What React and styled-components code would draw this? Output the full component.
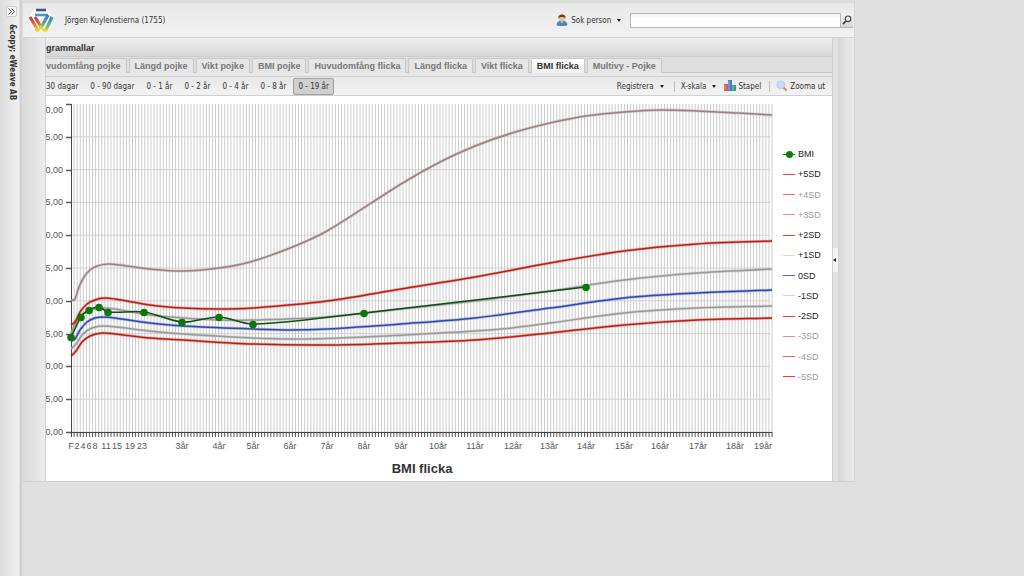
import React, { useState } from 'react';
import styled, { createGlobalStyle } from 'styled-components';

const GlobalStyle = createGlobalStyle`
  * {
    box-sizing: border-box;
  }
  body {
    margin: 0;
    background: #e0e0e0;
    font-family: 'DejaVu Sans Condensed', 'DejaVu Sans', sans-serif;
    font-size: 8px;
    color: #333;
  }
  button, input {
    font: inherit;
    color: inherit;
  }
`;

const TABS = [
  'vudomfång pojke',
  'Längd pojke',
  'Vikt pojke',
  'BMI pojke',
  'Huvudomfång flicka',
  'Längd flicka',
  'Vikt flicka',
  'BMI flicka',
  'Multivy - Pojke',
];

const RANGES = ['30 dagar', '0 - 90 dagar', '0 - 1 år', '0 - 2 år', '0 - 4 år', '0 - 8 år', '0 - 19 år'];

const LEGEND = [
  { label: 'BMI', color: '#0a7d0a', dot: true },
  { label: '+5SD', color: '#ea4a38' },
  { label: '+4SD', color: '#f06a60', muted: true },
  { label: '+3SD', color: '#f28884', muted: true },
  { label: '+2SD', color: '#f04030' },
  { label: '+1SD', color: '#f8c8be' },
  { label: '0SD', color: '#3a6cd0' },
  { label: '-1SD', color: '#f8c8be' },
  { label: '-2SD', color: '#f04030' },
  { label: '-3SD', color: '#f28884', muted: true },
  { label: '-4SD', color: '#f06060', muted: true },
  { label: '-5SD', color: '#f04030', muted: true },
];

// plot area inside the svg
const LEFT = 25;
const RIGHT = 726;
const TOP = 8;
const BOTTOM = 336;
const MONTHS = 228;

const CURVES = [
  {
    id: '+5SD',
    color: '#9c8080',
    points: [[25, 204], [29, 203], [33, 191], [38, 181], [44, 174], [51, 170], [62, 168], [74, 169], [104, 173], [137, 175], [173, 172], [204, 166], [244, 152], [281, 135], [355, 88], [394, 66], [429, 50], [466, 37], [504, 27], [540, 20], [578, 16], [614, 14], [651, 15], [726, 19]],
  },
  {
    id: '+1SD',
    color: '#999',
    points: [[25, 237], [32, 222], [41, 215], [54, 212], [69, 213], [104, 219], [137, 222], [173, 224], [207, 224], [281, 221], [355, 213], [429, 205], [504, 195], [578, 184], [651, 177], [726, 173]],
  },
  {
    id: '-1SD',
    color: '#999',
    points: [[25, 253], [30, 248], [37, 238], [46, 232], [58, 230], [104, 235], [137, 238], [207, 242], [254, 243], [318, 241], [394, 237], [429, 235], [466, 232], [504, 227], [578, 217], [651, 212], [726, 210]],
  },
  {
    id: '+2SD',
    color: '#bf1c10',
    points: [[25, 229], [29, 226], [34, 216], [41, 208], [49, 204], [58, 202], [69, 203], [104, 209], [137, 212], [173, 213], [207, 212], [281, 205], [355, 193], [429, 181], [504, 167], [578, 155], [651, 148], [726, 145]],
  },
  {
    id: '-2SD',
    color: '#bf1c10',
    points: [[25, 260], [30, 255], [36, 246], [44, 240], [56, 237], [69, 238], [104, 242], [137, 244], [207, 248], [281, 249], [355, 247], [429, 244], [504, 237], [578, 229], [651, 224], [726, 222]],
  },
  {
    id: '0SD',
    color: '#2c49b4',
    points: [[25, 245], [29, 243], [34, 234], [41, 226], [49, 222], [58, 221], [69, 222], [104, 227], [137, 230], [207, 233], [244, 234], [281, 233], [355, 228], [429, 222], [504, 212], [578, 202], [651, 197], [726, 194]],
  },
];

const MEASUREMENTS = [[25, 241], [35, 221], [43, 214], [53, 211], [62, 216], [98, 216], [136, 226], [173, 221], [207, 228], [318, 217], [540, 191]];

const Y_LABELS = ['0,00', '5,00', '0,00', '5,00', '0,00', '5,00', '0,00', '5,00', '0,00', '5,00', '0,00'];

const X_LABELS = [
  ['F', 25], ['2', 31], ['4', 37], ['6', 43], ['8', 49], ['11', 60], ['15', 71], ['19', 84], ['23', 96],
  ['3år', 136], ['4år', 173], ['5år', 207], ['6år', 244], ['7år', 281], ['8år', 318], ['9år', 355],
  ['10år', 392], ['11år', 429], ['12år', 467], ['13år', 503], ['14år', 540], ['15år', 578],
  ['16år', 614], ['17år', 652], ['18år', 689], ['19år', 717],
];

// cubic curve through the points, slope at each one taken from its neighbours
const smooth = (pts) => {
  const last = pts.length - 1;
  const slopes = pts.map((_, i) => {
    const [xa, ya] = pts[Math.max(i - 1, 0)];
    const [xb, yb] = pts[Math.min(i + 1, last)];
    return (yb - ya) / (xb - xa);
  });
  let d = `M${pts[0][0]} ${pts[0][1]}`;
  for (let i = 0; i < last; i++) {
    const [x0, y0] = pts[i];
    const [x1, y1] = pts[i + 1];
    const h = (x1 - x0) / 3;
    d += `C${x0 + h} ${y0 + slopes[i] * h} ${x1 - h} ${y1 - slopes[i + 1] * h} ${x1} ${y1}`;
  }
  return d;
};

const Logo = () => (
  <svg width="26" height="26" viewBox="0 0 26 26" aria-label="eWeave" fill="none">
    <defs>
      <linearGradient id="warm" gradientUnits="userSpaceOnUse" x1="0" y1="8" x2="0" y2="24">
        <stop offset="0" stopColor="#8c4a86" />
        <stop offset=".4" stopColor="#d8503c" />
        <stop offset=".75" stopColor="#f0a030" />
        <stop offset="1" stopColor="#f0d030" />
      </linearGradient>
      <linearGradient id="cool" gradientUnits="userSpaceOnUse" x1="0" y1="8" x2="0" y2="24">
        <stop offset="0" stopColor="#4078b4" />
        <stop offset=".45" stopColor="#4ca4a4" />
        <stop offset=".75" stopColor="#90c050" />
        <stop offset="1" stopColor="#e0d430" />
      </linearGradient>
    </defs>
    <circle cx="13" cy="13" r="12" fill="#fafafa" />
    <path d="M8 3h10" stroke="#3c588c" strokeWidth="2.600" />
    <path d="M7 8h13" stroke="#5c90c8" strokeWidth="2.600" />
    <path d="M2 10l7 12M7 10l6 10" stroke="url(#warm)" strokeWidth="3.200" />
    <path d="M24 10l-6 13M20 8l-7 13" stroke="url(#cool)" strokeWidth="3.200" />
    <path d="M7 22l3 1.500 3-4 3 4h3" stroke="#e6ce34" strokeWidth="2.200" />
  </svg>
);

const PersonIcon = () => (
  <svg width="12" height="12" viewBox="0 0 12 12" aria-hidden="true">
    <path d="M1 11c0-3 2-4 5-4s5 1 5 4c-2 1-8 1-10 0z" fill="#4f86c4" stroke="#386296" strokeWidth=".6" />
    <circle cx="6" cy="4.500" r="3" fill="#f0bd8c" />
    <path d="M2.500 5C2 1.500 4 .5 6 .5S10 1.500 9.500 5C9 3 7 3 6 3S3 3 2.500 5z" fill="#6a4018" />
    <path d="M4.500 7.500h3L6 9z" fill="#dce8f6" />
  </svg>
);

const SearchIcon = () => (
  <svg width="10" height="10" viewBox="0 0 10 10" aria-hidden="true" fill="none" stroke="#444">
    <circle cx="6" cy="3.800" r="2.800" strokeWidth="1.200" />
    <path d="M4 6L1 9.200" strokeWidth="1.800" />
  </svg>
);

const BarsIcon = () => (
  <svg width="12" height="12" viewBox="0 0 12 12" aria-hidden="true">
    <rect x="0" y="4" width="4" height="7" fill="#dd5858" />
    <rect x="4" y="0" width="4" height="11" fill="#3f80d0" />
    <rect x="8" y="5" width="4" height="6" fill="#3f9a80" />
    <path d="M1 5v5M5 1v9M9 6v4" stroke="#fff" strokeOpacity=".4" />
  </svg>
);

const ZoomIcon = () => (
  <svg width="12" height="12" viewBox="0 0 12 12" aria-hidden="true">
    <path d="M7.500 7.500l2.500 2.500" stroke="#cf9848" strokeWidth="2.200" strokeLinecap="round" />
    <circle cx="4.800" cy="4.800" r="3.800" fill="#c4def8" stroke="#b0cae8" />
  </svg>
);

const Growth = () => (
  <ChartSvg viewBox="0 0 732 360" role="img" aria-label="BMI flicka">
    {Y_LABELS.slice(1).map((_, i) => (
      <path key={i} d={`M${LEFT} ${TOP + (i + 1) * 32.8}H${RIGHT - 2}`} stroke="#d4d4d4" />
    ))}
    {Array.from({ length: MONTHS }, (_, i) => {
      const x = LEFT + ((i + 1) * (RIGHT - LEFT)) / MONTHS;
      return (
        <g key={i}>
          <path d={`M${x} ${TOP}V${BOTTOM}`} stroke="#ccc" />
          <path d={`M${x} ${BOTTOM}v5`} stroke="#555" />
        </g>
      );
    })}
    {Y_LABELS.map((label, i) => {
      const y = Math.round(TOP + i * 32.8);
      return (
        <g key={i}>
          <path d={`M20 ${y + 0.5}h5`} stroke="#555" strokeWidth="1.500" />
          <text x="17" y={i === 0 ? y + 9 : y + 3} textAnchor="end">{label}</text>
        </g>
      );
    })}
    <path d={`M25.500 ${TOP}V${BOTTOM + 5}M25 ${BOTTOM + 0.5}H${RIGHT}`} stroke="#444" fill="none" />
    {CURVES.map((curve) => (
      <g key={curve.id} fill="none">
        <path d={smooth(curve.points)} stroke={curve.color} strokeOpacity=".3" strokeWidth="3" />
        <path d={smooth(curve.points)} stroke={curve.color} strokeWidth="1.500" />
      </g>
    ))}
    <path d={smooth(MEASUREMENTS)} stroke="#0d4f12" strokeWidth="1.600" fill="none" />
    {MEASUREMENTS.map(([x, y]) => (
      <circle key={x} cx={x} cy={y + 0.5} r="3.800" fill="#0a780a" />
    ))}
    {X_LABELS.map(([label, x]) => (
      <text key={label} x={x} y="353" textAnchor="middle">{label}</text>
    ))}
  </ChartSvg>
);

const App = () => {
  const [tab, setTab] = useState('BMI flicka');
  const [range, setRange] = useState('0 - 19 år');
  const [query, setQuery] = useState('');

  return (
    <Page>
      <GlobalStyle />
      <SideBar>
        <ExpandButton aria-label="Expandera">
          <svg width="7" height="7" viewBox="0 0 7 7" fill="none" stroke="#444">
            <path d="M.5 .5l3 3-3 3M3.500 .5l3 3-3 3" />
          </svg>
        </ExpandButton>
        <SideTitle>&amp;copy; eWeave AB</SideTitle>
      </SideBar>
      <Main>
        <Header>
          <Logo />
          <Patient>Jörgen Kuylenstierna (1755)</Patient>
          <ToolButton><PersonIcon />Sok person<Caret /></ToolButton>
          <SearchBox>
            <SearchInput aria-label="Sok person" value={query} onChange={(e) => setQuery(e.target.value)} />
            <SearchButton aria-label="Sok"><SearchIcon /></SearchButton>
          </SearchBox>
        </Header>
        <Body>
          <Gutter />
          <Panel>
            <PanelTitle>grammallar</PanelTitle>
            <TabStrip role="tablist">
              {TABS.map((name) => (
                <Tab key={name} role="tab" aria-selected={name === tab} $active={name === tab} onClick={() => setTab(name)}>
                  {name}
                </Tab>
              ))}
            </TabStrip>
            <Toolbar>
              <Ranges>
                {RANGES.map((name) => (
                  <RangeButton key={name} $active={name === range} onClick={() => setRange(name)}>{name}</RangeButton>
                ))}
              </Ranges>
              <Actions>
                <ToolButton>Registrera<Caret /></ToolButton>
                <Separator />
                <ToolButton>X-skala<Caret /></ToolButton>
                <ToolButton $tight><BarsIcon />Stapel</ToolButton>
                <Separator />
                <ToolButton $tight><ZoomIcon />Zooma ut</ToolButton>
              </Actions>
            </Toolbar>
            <Content>
              <ChartRow>
                <Growth />
                <Legend>
                  {LEGEND.map((item) => (
                    <LegendItem key={item.label} $muted={item.muted}>
                      <Swatch $color={item.color} $dot={item.dot} />
                      {item.label}
                    </LegendItem>
                  ))}
                </Legend>
              </ChartRow>
              <ChartTitle>BMI flicka</ChartTitle>
            </Content>
          </Panel>
          <Splitter>
            <SplitHandle aria-label="Visa panel" />
          </Splitter>
          <RightGutter />
        </Body>
      </Main>
    </Page>
  );
};

export default App;

const Page = styled.div`
  display: flex;
  align-items: flex-start;
  min-height: 100vh;
`;

const SideBar = styled.aside`
  display: flex;
  flex-direction: column;
  align-items: center;
  align-self: stretch;
  gap: 7px;
  width: 23px;
  flex: none;
  padding-top: 6px;
  background: linear-gradient(90deg, #dcdcdc, #f0f0f0 19px, #cfcfcf 20px, #d4d4d4 22px, #e4e4e4);
`;

const ExpandButton = styled.button`
  display: flex;
  align-items: center;
  justify-content: center;
  width: 11px;
  height: 11px;
  padding: 0;
  border: 1px solid #ccc;
  border-radius: 2px;
  background: #f6f6f6;
`;

const SideTitle = styled.div`
  writing-mode: vertical-rl;
  font-weight: bold;
  line-height: 10px;
`;

const Main = styled.main`
  width: calc(83.5% - 23px);
  border-top: 3px solid #dcdcdc;
  border-right: 1px solid #d4d4d4;
`;

const Header = styled.header`
  display: flex;
  align-items: center;
  height: 35px;
  padding: 0 1px 0 5px;
  background: linear-gradient(#e9e9e9, #f1f1f1);
  border-bottom: 1px solid #d2d2d2;
`;

const Patient = styled.span`
  flex: 1;
  padding-left: 11px;
`;

const SearchBox = styled.div`
  display: flex;
  width: 27%;
  margin-left: 7px;
`;

const SearchInput = styled.input`
  flex: 1;
  min-width: 0;
  height: 15px;
  padding: 0 4px;
  border: 1px solid #b5b8c0;
  background: linear-gradient(#f0f0f0, #fff 4px);
`;

const SearchButton = styled.button`
  display: flex;
  align-items: center;
  justify-content: center;
  width: 12px;
  padding: 0;
  border: 0;
  border-bottom: 1px solid #b5b8c0;
  background: linear-gradient(#f4f4f4, #d6d6d6);
`;

const ToolButton = styled.button`
  display: flex;
  align-items: center;
  gap: ${(props) => (props.$tight ? 2 : 3)}px;
  padding: 0;
  border: 0;
  background: none;
  white-space: nowrap;
`;

const Caret = styled.span`
  margin: 0 2px 0 3px;
  border: 2px solid transparent;
  border-top: 3px solid #222;
  border-bottom: 0;
`;

const Body = styled.div`
  display: flex;
  border-bottom: 1px solid #d0d0d0;
`;

const Gutter = styled.div`
  width: 23px;
  flex: none;
  background: linear-gradient(90deg, #d9d9d9, #ececec);
  border-right: 1px solid #d0d0d0;
`;

const RightGutter = styled(Gutter)`
  width: 16px;
  border-left: 1px solid #d0d0d0;
  border-right: 0;
`;

const Panel = styled.section`
  flex: 1;
  min-width: 0;
  font-family: 'Liberation Sans', Arial, sans-serif;
`;

const PanelTitle = styled.h1`
  height: 19px;
  margin: 0;
  font-size: 9px;
  line-height: 20px;
  color: #333;
  background: linear-gradient(#f0f0f0, #d6d6d6);
  border-bottom: 1px solid #cdcdcd;
`;

const TabStrip = styled.div`
  display: flex;
  gap: 2px;
  height: 19px;
  padding-top: 1px;
  overflow: hidden;
  background: #dedede;
  border-bottom: 3px solid #e8e8e8;
  box-shadow: inset 0 -1px #c8c8c8;
`;

const Tab = styled.button`
  padding: 0 5px;
  border: 1px solid #c8c8c8;
  border-bottom: 0;
  border-radius: 2px 2px 0 0;
  background: ${(props) => (props.$active ? 'linear-gradient(#fff, #f0f0f0)' : '#e6e6e6')};
  color: ${(props) => (props.$active ? '#333' : '#777')};
  font-size: 9px;
  font-weight: bold;
  line-height: 14px;
  white-space: nowrap;
  &:first-child {
    padding-left: 0;
    border-left: 0;
  }
`;

const Toolbar = styled.div`
  display: flex;
  align-items: center;
  justify-content: space-between;
  height: 20px;
  padding-right: 7px;
  font-family: 'DejaVu Sans Condensed', 'DejaVu Sans', sans-serif;
  background: linear-gradient(#e8e8e8, #f2f2f2);
  border-top: 1px solid #cfcfcf;
  border-bottom: 1px solid #cfcfcf;
`;

const Ranges = styled.div`
  display: flex;
  gap: 2px;
`;

const RangeButton = styled.button`
  height: 17px;
  padding: 0 4px;
  border: 1px solid ${(props) => (props.$active ? '#a0a0a0' : 'transparent')};
  border-radius: 2px;
  background: ${(props) => (props.$active ? '#cfcfcf' : 'none')};
  white-space: nowrap;
  &:first-child {
    padding-left: 0;
    border-left: 0;
  }
`;

const Actions = styled.div`
  display: flex;
  align-items: center;
  gap: 6px;
`;

const Separator = styled.span`
  width: 1px;
  height: 11px;
  margin-left: 2px;
  background: #c0c0c0;
`;

const Content = styled.div`
  padding-bottom: 2px;
  background: #fff;
`;

const ChartRow = styled.div`
  display: flex;
  align-items: flex-start;
`;

const ChartSvg = styled.svg`
  display: block;
  flex: 1;
  min-width: 0;
  text {
    font-size: 9px;
    fill: #555;
  }
`;

const Legend = styled.ul`
  display: flex;
  flex-direction: column;
  justify-content: space-between;
  min-height: 235px;
  width: 54px;
  margin: 52px 0 0;
  padding: 0 0 0 5px;
  list-style: none;
`;

const LegendItem = styled.li`
  display: flex;
  align-items: center;
  gap: 3px;
  font-size: 9px;
  line-height: 12px;
  color: ${(props) => (props.$muted ? '#999' : '#222')};
`;

const Swatch = styled.span`
  display: flex;
  align-items: center;
  justify-content: center;
  width: 12px;
  height: 1px;
  background: ${(props) => props.$color};
  &::after {
    content: '';
    flex: none;
    width: ${(props) => (props.$dot ? 7 : 0)}px;
    height: ${(props) => (props.$dot ? 7 : 0)}px;
    border-radius: 50%;
    background: ${(props) => props.$color};
  }
`;

const ChartTitle = styled.h2`
  margin: 0;
  padding: 3px 34px 0 0;
  font-size: 13px;
  line-height: 20px;
  text-align: center;
  color: #333;
`;

const Splitter = styled.div`
  display: flex;
  align-items: center;
  width: 6px;
  flex: none;
  background: #e2e2e2;
  border-left: 1px solid #d0d0d0;
`;

const SplitHandle = styled.button`
  display: flex;
  align-items: center;
  width: 5px;
  height: 24px;
  padding: 0;
  border: 0;
  background: #f4f4f4;
  &::before {
    content: '';
    border: 2px solid transparent;
    border-right: 3px solid #222;
    border-left: 0;
  }
`;
